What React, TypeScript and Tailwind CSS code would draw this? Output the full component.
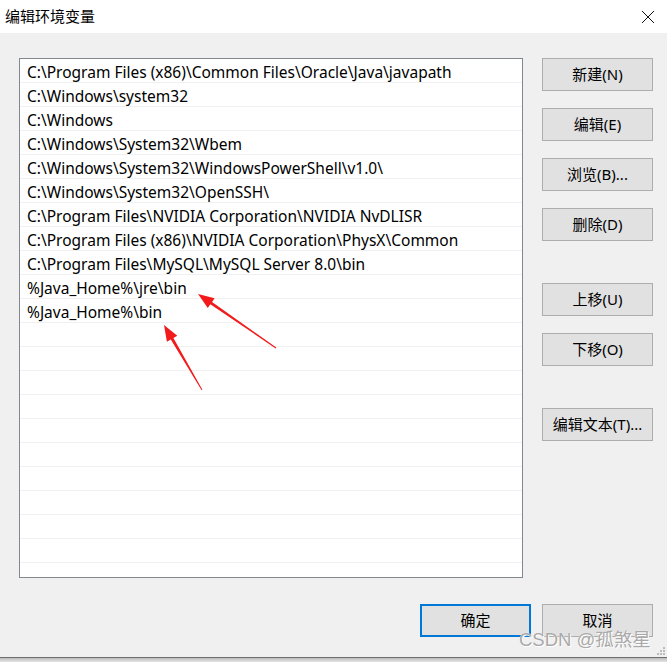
import React from "react";

const paths = [
  "C:\\Program Files (x86)\\Common Files\\Oracle\\Java\\javapath",
  "C:\\Windows\\system32",
  "C:\\Windows",
  "C:\\Windows\\System32\\Wbem",
  "C:\\Windows\\System32\\WindowsPowerShell\\v1.0\\",
  "C:\\Windows\\System32\\OpenSSH\\",
  "C:\\Program Files\\NVIDIA Corporation\\NVIDIA NvDLISR",
  "C:\\Program Files (x86)\\NVIDIA Corporation\\PhysX\\Common",
  "C:\\Program Files\\MySQL\\MySQL Server 8.0\\bin",
  "%Java_Home%\\jre\\bin",
  "%Java_Home%\\bin",
];

const TOTAL_ROWS = 22;

function Btn({ label, primary = false }: { label: string; primary?: boolean }) {
  return (
    <button
      className={
        "w-[111px] h-[33px] bg-[#e1e1e1] text-[15px] text-black flex items-center justify-center " +
        (primary ? "border-2 border-[#0078d7]" : "border border-[#adadad]")
      }
    >
      {label}
    </button>
  );
}

export default function App() {
  const rows = Array.from({ length: TOTAL_ROWS }, (_, i) => paths[i] ?? "");

  return (
    <div
      className="relative w-[667px] h-[662px] bg-[#f0f0f0] flex flex-col overflow-hidden"
      style={{ fontFamily: '"Noto Sans", "Noto Sans CJK SC", sans-serif' }}
    >
      {/* title bar */}
      <div className="h-[33px] bg-white flex items-center justify-between pl-[5px] pr-[10px] shrink-0">
        <span className="text-[15px] text-black">编辑环境变量</span>
        <svg width="16" height="16" viewBox="0 0 16 16" className="mr-[1px]">
          <path d="M2 2 L14 14 M14 2 L2 14" stroke="#111" strokeWidth="1" fill="none" />
        </svg>
      </div>

      {/* body */}
      <div className="flex pl-[19px] pt-[25px]">
        <div className="w-[504px] h-[520px] border border-[#828790] bg-white overflow-hidden">
          {rows.map((p, i) => (
            <div
              key={i}
              className="h-[24px] border-b border-[#f0f0f0] flex items-center pl-[7px] pt-[4px] text-[15.5px] text-black whitespace-nowrap leading-none"
            >
              {p}
            </div>
          ))}
        </div>

        <div className="ml-[19px] flex flex-col">
          <div className="flex flex-col gap-[17px]">
            <Btn label="新建(N)" />
            <Btn label="编辑(E)" />
            <Btn label="浏览(B)..." />
            <Btn label="删除(D)" />
          </div>
          <div className="flex flex-col gap-[17px] mt-[42px]">
            <Btn label="上移(U)" />
            <Btn label="下移(O)" />
          </div>
          <div className="mt-[42px]">
            <Btn label="编辑文本(T)..." />
          </div>
        </div>
      </div>

      {/* footer buttons */}
      <div className="flex justify-end gap-[11px] pr-[14px] mt-[26px]">
        <Btn label="确定" primary />
        <Btn label="取消" />
      </div>

      <div className="flex-1" />
      <div className="h-[1px] bg-[#6d6d6d] shrink-0" />
      <div className="h-[4px] bg-gradient-to-b from-[#bdbdbd] to-[#e4e4e4] shrink-0" />

      {/* resize grip */}
      <svg className="absolute right-[1px] bottom-[6px]" width="12" height="10" viewBox="0 0 12 10">
        <rect x="9" y="1" width="2" height="2" fill="#bcbcbc" />
        <rect x="6" y="4" width="2" height="2" fill="#bcbcbc" />
        <rect x="9" y="4" width="2" height="2" fill="#bcbcbc" />
        <rect x="3" y="7" width="2" height="2" fill="#bcbcbc" />
        <rect x="6" y="7" width="2" height="2" fill="#bcbcbc" />
        <rect x="9" y="7" width="2" height="2" fill="#bcbcbc" />
      </svg>

      {/* watermark */}
      <div
        className="absolute left-[519px] top-[631px] text-[18.5px] text-[#a9a9a9] leading-none whitespace-nowrap [text-shadow:0_0_1px_#ffffff,1px_1px_0_#ffffff]"
        style={{ fontFamily: '"Liberation Sans", "Noto Sans CJK SC", sans-serif' }}
      >
        CSDN @孤煞星
      </div>

      {/* red annotation arrows */}
      <svg className="absolute inset-0 pointer-events-none" width="667" height="662">
        <polygon
          fill="#f21a1a"
          points="198,294 214.6,298.2 212.05,301.9 276.3,347.6 275.7,348.4 210.3,304.3 207.8,308"
        />
        <polygon
          fill="#f21a1a"
          points="164,325 177.3,335.8 173.4,338 202.4,389.7 201.6,390.3 170.8,339.6 166.9,341.8"
        />
      </svg>
    </div>
  );
}
